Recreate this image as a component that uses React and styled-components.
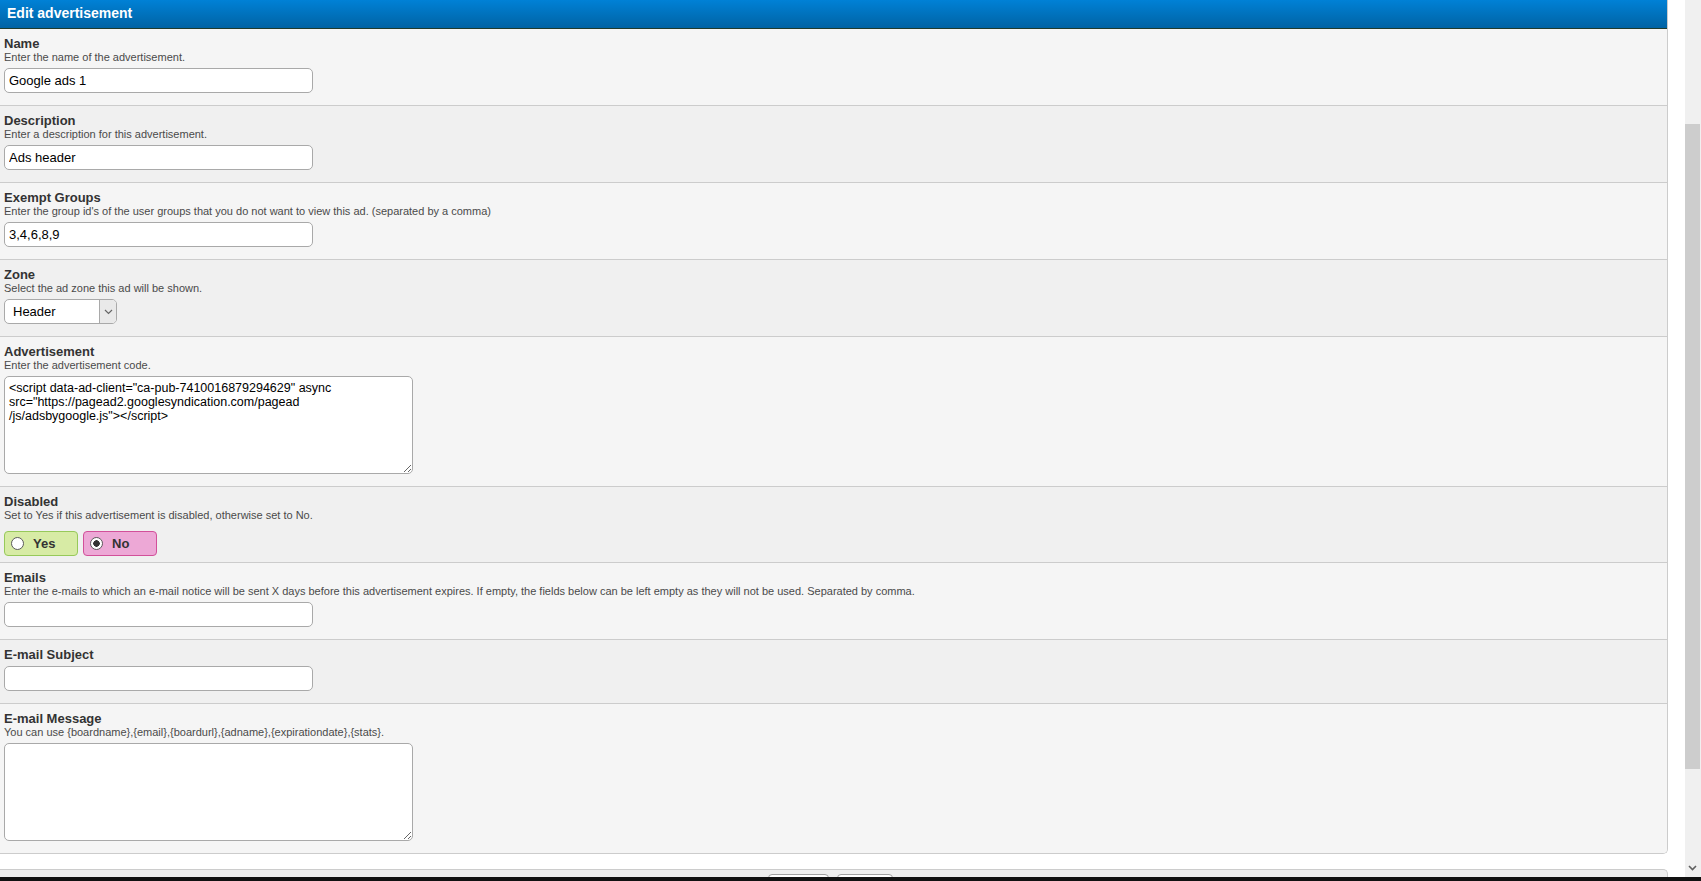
import React from "react";
import styled, { createGlobalStyle } from "styled-components";

const GlobalStyle = createGlobalStyle`
  html, body {
    margin: 0;
    padding: 0;
    background: #ffffff;
    overflow: hidden;
  }
  body {
    font-family: Tahoma, "Liberation Sans", Arial, sans-serif;
  }
`;

const adCode = `<script data-ad-client="ca-pub-7410016879294629" async
src="https://pagead2.googlesyndication.com/pagead
/js/adsbygoogle.js"></script>`;

const App = () => {
  return (
    <Screen>
      <GlobalStyle />
      <Viewport>
        <Page>
          <Panel>
            <Header>Edit advertisement</Header>

            <Row>
              <Label>Name</Label>
              <Desc>Enter the name of the advertisement.</Desc>
              <TextInput defaultValue="Google ads 1" />
            </Row>

            <Row alt>
              <Label>Description</Label>
              <Desc>Enter a description for this advertisement.</Desc>
              <TextInput defaultValue="Ads header" />
            </Row>

            <Row>
              <Label>Exempt Groups</Label>
              <Desc>
                Enter the group id's of the user groups that you do not want to
                view this ad. (separated by a comma)
              </Desc>
              <TextInput defaultValue="3,4,6,8,9" />
            </Row>

            <Row alt>
              <Label>Zone</Label>
              <Desc>Select the ad zone this ad will be shown.</Desc>
              <SelectWrap>
                <Select defaultValue="header">
                  <option value="header">Header</option>
                  <option value="footer">Footer</option>
                </Select>
                <SelectArrow>
                  <svg width="9" height="6" viewBox="0 0 9 6">
                    <path d="M1 1l3.5 3.5L8 1" fill="none" stroke="#666" strokeWidth="1.2" />
                  </svg>
                </SelectArrow>
              </SelectWrap>
            </Row>

            <Row>
              <Label>Advertisement</Label>
              <Desc>Enter the advertisement code.</Desc>
              <TextArea defaultValue={adCode} />
            </Row>

            <Row alt tight>
              <Label>Disabled</Label>
              <Desc>Set to Yes if this advertisement is disabled, otherwise set to No.</Desc>
              <RadioGroup>
                <RadioBox tone="yes">
                  <Circle />
                  Yes
                </RadioBox>
                <RadioBox tone="no">
                  <Circle checked />
                  No
                </RadioBox>
              </RadioGroup>
            </Row>

            <Row>
              <Label>Emails</Label>
              <Desc>
                Enter the e-mails to which an e-mail notice will be sent X days
                before this advertisement expires. If empty, the fields below can
                be left empty as they will not be used. Separated by comma.
              </Desc>
              <TextInput defaultValue="" />
            </Row>

            <Row alt>
              <Label>E-mail Subject</Label>
              <TextInput defaultValue="" />
            </Row>

            <Row last>
              <Label>E-mail Message</Label>
              <Desc>
                You can use {"{boardname}"},{"{email}"},{"{boardurl}"},{"{adname}"},
                {"{expirationdate}"},{"{stats}"}.
              </Desc>
              <TextArea defaultValue="" />
            </Row>
          </Panel>

          <BottomBar>
            <BarButton wide />
            <BarButton />
          </BottomBar>
        </Page>

        <Scrollbar>
          <Thumb />
          <ScrollArrow>
            <svg width="9" height="6" viewBox="0 0 9 6">
              <path d="M1 1l3.5 3.5L8 1" fill="none" stroke="#606060" strokeWidth="1.6" />
            </svg>
          </ScrollArrow>
        </Scrollbar>
      </Viewport>
      <Taskbar />
    </Screen>
  );
};

export default App;

const Screen = styled.div`
  width: 1701px;
  height: 881px;
  display: flex;
  flex-direction: column;
  overflow: hidden;
`;

const Viewport = styled.div`
  flex: 1;
  display: flex;
  min-height: 0;
`;

const Page = styled.div`
  flex: 1;
  overflow: hidden;
  background: #ffffff;
  padding-right: 17px;
`;

const Panel = styled.div`
  border-right: 1px solid #cccccc;
  border-bottom: 1px solid #cccccc;
  border-bottom-right-radius: 5px;
  background: #f5f5f5;
  overflow: hidden;
`;

const Header = styled.div`
  height: 28px;
  line-height: 26px;
  padding-left: 7px;
  background: linear-gradient(#0081d6, #0063a4);
  border-bottom: 1px solid #1f3a2c;
  color: #ffffff;
  font-size: 14px;
  font-weight: bold;
`;

const Row = styled.div`
  padding: 8px 4px ${(p) => (p.tight ? "6px" : "12px")};
  background: ${(p) => (p.alt ? "#f0f0f0" : "#f5f5f5")};
  border-bottom: ${(p) => (p.last ? "none" : "1px solid #cccccc")};
`;

const Label = styled.div`
  font-size: 13px;
  line-height: 14px;
  font-weight: bold;
  color: #333333;
`;

const Desc = styled.div`
  font-size: 11px;
  line-height: 13px;
  color: #4a4a4a;
`;

const TextInput = styled.input`
  display: block;
  box-sizing: border-box;
  margin-top: 4px;
  width: 309px;
  height: 25px;
  padding: 0 4px;
  border: 1px solid #a9a9a9;
  border-radius: 5px;
  background: #ffffff;
  font-family: inherit;
  font-size: 13px;
  color: #000000;
  outline: none;
`;

const SelectWrap = styled.div`
  position: relative;
  margin-top: 4px;
  width: 113px;
  height: 25px;
`;

const Select = styled.select`
  appearance: none;
  box-sizing: border-box;
  width: 100%;
  height: 100%;
  padding: 0 0 0 8px;
  border: 1px solid #a9a9a9;
  border-radius: 5px;
  background: #ffffff;
  font-family: inherit;
  font-size: 13px;
  color: #000000;
  outline: none;
`;

const SelectArrow = styled.div`
  position: absolute;
  top: 1px;
  right: 1px;
  bottom: 1px;
  width: 16px;
  display: flex;
  align-items: center;
  justify-content: center;
  background: #e9e9e9;
  border-left: 1px solid #a9a9a9;
  border-radius: 0 4px 4px 0;
  pointer-events: none;
`;

const TextArea = styled.textarea`
  display: block;
  box-sizing: border-box;
  margin-top: 4px;
  width: 409px;
  height: 98px;
  padding: 4px;
  border: 1px solid #a9a9a9;
  border-radius: 5px;
  background: #ffffff;
  font-family: inherit;
  font-size: 12.5px;
  line-height: 14px;
  color: #000000;
  outline: none;
`;

const RadioGroup = styled.div`
  display: flex;
  gap: 5px;
  margin-top: 9px;
`;

const RadioBox = styled.label`
  box-sizing: border-box;
  display: flex;
  align-items: center;
  gap: 9px;
  width: 74px;
  height: 25px;
  padding-left: 6px;
  border-radius: 4px;
  border: 1px solid ${(p) => (p.tone === "yes" ? "#97c95a" : "#d2509a")};
  background: ${(p) => (p.tone === "yes" ? "#d7eba5" : "#eda8d6")};
  font-size: 13px;
  font-weight: bold;
  color: #333333;
`;

const Circle = styled.span`
  box-sizing: border-box;
  width: 13px;
  height: 13px;
  border-radius: 50%;
  border: 1px solid #5a5a5a;
  background: ${(p) =>
    p.checked
      ? "radial-gradient(circle, #333333 0 3px, #ffffff 3.5px)"
      : "#ffffff"};
`;

const BottomBar = styled.div`
  display: flex;
  justify-content: center;
  gap: 8px;
  margin-top: 15px;
  height: 40px;
  padding-top: 4px;
  padding-right: 6px;
  box-sizing: border-box;
  background: #eeeeee;
  border-top: 1px solid #cccccc;
  border-right: 1px solid #cccccc;
  border-top-right-radius: 5px;
`;

const BarButton = styled.div`
  width: ${(p) => (p.wide ? "59px" : "54px")};
  height: 24px;
  background: #ffffff;
  border: 1px solid #a0a0a0;
  border-radius: 4px;
`;

const Scrollbar = styled.div`
  position: relative;
  width: 16px;
  background: #f0f0f0;
`;

const Thumb = styled.div`
  margin-top: 124px;
  width: 15px;
  height: 645px;
  background: #cdcdcd;
`;

const ScrollArrow = styled.div`
  position: absolute;
  bottom: 6px;
  left: 0;
  width: 15px;
  display: flex;
  justify-content: center;
`;

const Taskbar = styled.div`
  height: 4px;
  background: #111111;
`;
